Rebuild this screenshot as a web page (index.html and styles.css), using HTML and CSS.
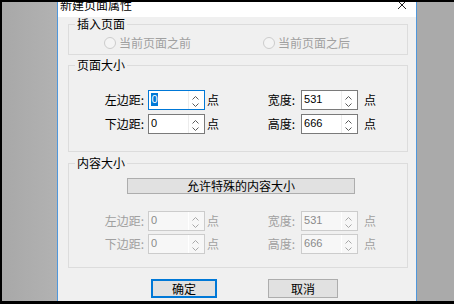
FILE: index.html
```html
<!DOCTYPE html>
<html lang="zh-CN">
<head>
    <meta charset="UTF-8">
    <title>新建页面属性</title>
    <link rel="stylesheet" href="styles.css">
</head>
<body>
    <div class="desk">
        <div class="side"></div>

        <div class="dialog">
            <div class="titlebar">
                <span class="title">新建页面属性</span>
                <svg class="close" width="10" height="10" viewBox="0 0 10 10">
                    <path d="M1 1 L9 9 M9 1 L1 9" stroke="#222" stroke-width="1" fill="none"/>
                </svg>
            </div>

            <div class="body">
                <!-- 插入位置 -->
                <fieldset class="group g-insert">
                    <legend>插入页面</legend>
                    <div class="radios">
                        <label class="radio first"><span class="dot"></span>当前页面之前</label>
                        <label class="radio"><span class="dot"></span>当前页面之后</label>
                    </div>
                </fieldset>

                <!-- 页面大小 -->
                <fieldset class="group g-page">
                    <legend>页面大小</legend>
                    <div class="row">
                        <span class="lbl">左边距:</span>
                        <div class="spin focus">
                            <span class="val"><span class="sel">0</span></span>
                            <span class="arrows"><svg width="15" height="18" viewBox="0 0 15 18"><polyline points="3.5,8.5 6.5,5.5 9.5,8.5"/><polyline points="3.5,12.5 6.5,15.5 9.5,12.5"/></svg></span>
                        </div>
                        <span class="unit">点</span>
                        <span class="lbl r">宽度:</span>
                        <div class="spin">
                            <span class="val">531</span>
                            <span class="arrows"><svg width="15" height="18" viewBox="0 0 15 18"><polyline points="3.5,8.5 6.5,5.5 9.5,8.5"/><polyline points="3.5,12.5 6.5,15.5 9.5,12.5"/></svg></span>
                        </div>
                        <span class="unit r">点</span>
                    </div>
                    <div class="row">
                        <span class="lbl">下边距:</span>
                        <div class="spin">
                            <span class="val">0</span>
                            <span class="arrows"><svg width="15" height="18" viewBox="0 0 15 18"><polyline points="3.5,8.5 6.5,5.5 9.5,8.5"/><polyline points="3.5,12.5 6.5,15.5 9.5,12.5"/></svg></span>
                        </div>
                        <span class="unit">点</span>
                        <span class="lbl r">高度:</span>
                        <div class="spin">
                            <span class="val">666</span>
                            <span class="arrows"><svg width="15" height="18" viewBox="0 0 15 18"><polyline points="3.5,8.5 6.5,5.5 9.5,8.5"/><polyline points="3.5,12.5 6.5,15.5 9.5,12.5"/></svg></span>
                        </div>
                        <span class="unit r">点</span>
                    </div>
                </fieldset>

                <!-- 内容大小 (禁用) -->
                <fieldset class="group g-content">
                    <legend>内容大小</legend>
                    <div class="wide-btn">允许特殊的内容大小</div>
                    <div class="rows disabled">
                        <div class="row">
                            <span class="lbl">左边距:</span>
                            <div class="spin">
                                <span class="val">0</span>
                                <span class="arrows"><svg width="15" height="18" viewBox="0 0 15 18"><polyline points="3.5,8.5 6.5,5.5 9.5,8.5"/><polyline points="3.5,12.5 6.5,15.5 9.5,12.5"/></svg></span>
                            </div>
                            <span class="unit">点</span>
                            <span class="lbl r">宽度:</span>
                            <div class="spin">
                                <span class="val">531</span>
                                <span class="arrows"><svg width="15" height="18" viewBox="0 0 15 18"><polyline points="3.5,8.5 6.5,5.5 9.5,8.5"/><polyline points="3.5,12.5 6.5,15.5 9.5,12.5"/></svg></span>
                            </div>
                            <span class="unit r">点</span>
                        </div>
                        <div class="row">
                            <span class="lbl">下边距:</span>
                            <div class="spin">
                                <span class="val">0</span>
                                <span class="arrows"><svg width="15" height="18" viewBox="0 0 15 18"><polyline points="3.5,8.5 6.5,5.5 9.5,8.5"/><polyline points="3.5,12.5 6.5,15.5 9.5,12.5"/></svg></span>
                            </div>
                            <span class="unit">点</span>
                            <span class="lbl r">高度:</span>
                            <div class="spin">
                                <span class="val">666</span>
                                <span class="arrows"><svg width="15" height="18" viewBox="0 0 15 18"><polyline points="3.5,8.5 6.5,5.5 9.5,8.5"/><polyline points="3.5,12.5 6.5,15.5 9.5,12.5"/></svg></span>
                            </div>
                            <span class="unit r">点</span>
                        </div>
                    </div>
                </fieldset>

                <div class="actions">
                    <div class="btn ok">确定</div>
                    <div class="btn cancel">取消</div>
                </div>
            </div>
        </div>
    </div>
</body>
</html>
```

FILE: styles.css
```css
html, body{
    margin: 0;
    background: #000;
}

body{
    width: 454px;
    height: 304px;
    overflow: hidden;
    font-family: "Noto Sans CJK SC", sans-serif;
    font-size: 12px;
    color: #000;
}

.desk{
    display: flex;
    width: 452px;
    height: 299px;
    margin: 2px 0 0 2px;
    background: #aaaaaa;
}

.side{
    width: 55px;
    background: linear-gradient(to right, #a8a8a8, #b2b2b2);
}

.dialog{
    width: 358px;
    border-left: 1px solid #4f97dc;
    border-right: 1px solid #4f97dc;
    display: flex;
    flex-direction: column;
    overflow: hidden;
}

.titlebar{
    height: 15px;
    background: #fff;
    display: flex;
    justify-content: space-between;
    overflow: hidden;
}

.title{
    line-height: 12px;
    margin-top: -3px;
    padding-left: 2px;
}

.close{
    margin-top: -2px;
    margin-right: 9px;
}

.body{
    flex: 1;
    background: #f0f0f0;
}

/* group box */
.group{
    margin: 0 8px 0 10px;
    padding: 0;
    border: 1px solid #dcdcdc;
    min-width: 0;
}

.group legend{
    margin-left: 6px;
    padding: 0 2px;
    line-height: 14px;
}

.g-page{
    margin-top: 3px;
}

.g-content{
    margin-top: 4px;
}

/* radios */
.radios{
    display: flex;
    height: 14px;
    padding: 5px 0 4px 35px;
    color: #a0a0a0;
}

.radio{
    display: flex;
    align-items: center;
    line-height: 14px;
}

.radio.first{
    width: 159px;
}

.dot{
    width: 10px;
    height: 10px;
    border: 1px solid #cccccc;
    border-radius: 50%;
    background: #f4f4f4;
    margin-right: 3px;
}

/* spin rows */
.g-page{
    padding-bottom: 17px;
}

.g-page .row:first-of-type{
    margin-top: 18px;
}

.row{
    display: flex;
    align-items: center;
    height: 20px;
}

.g-page .row + .row{
    margin-top: 4px;
}

.lbl{
    width: 75px;
    text-align: right;
    line-height: 14px;
}

.lbl.r{
    width: 76px;
}

.unit{
    margin-left: 2px;
    line-height: 14px;
}

.unit.r{
    margin-left: 6px;
}

.spin{
    box-sizing: border-box;
    width: 57px;
    height: 20px;
    margin-left: 4px;
    border: 1px solid #7a7a7a;
    background: #fff;
    display: flex;
}

.lbl.r + .spin{
    margin-left: 6px;
}

.spin.focus{
    border-color: #0078d7;
}

.val{
    flex: 1;
    padding: 2px 0 0 2px;
    font-family: "Liberation Sans", sans-serif;
    font-size: 11px;
    line-height: 13px;
}

.sel{
    display: inline-block;
    background: #0078d7;
    color: #fff;
    padding: 0 0.5px;
}

.arrows{
    width: 15px;
    border-left: 1px solid #ececec;
}

.arrows svg{
    display: block;
}

.arrows polyline{
    fill: none;
    stroke: #5a5a5a;
    stroke-width: 1;
}

/* content size group */
.wide-btn{
    box-sizing: border-box;
    width: 228px;
    height: 16px;
    margin: 8px 0 0 58px;
    border: 1px solid #adadad;
    background: #e1e1e1;
    text-align: center;
    line-height: 14px;
}

.rows{
    margin-top: 17px;
    padding-bottom: 13px;
}

.rows .row + .row{
    margin-top: 3px;
}

.disabled{
    color: #a0a0a0;
}

.disabled .spin{
    border-color: #cccccc;
    background: #f7f7f7;
}

.disabled .val{
    color: #8a8a8a;
}

.disabled .arrows{
    border-left-color: #fff;
}

.disabled .arrows polyline{
    stroke: #a8a8a8;
}

/* bottom buttons */
.actions{
    display: flex;
    margin-top: 11px;
}

.btn{
    box-sizing: border-box;
    height: 19px;
    border: 1px solid #adadad;
    background: #e1e1e1;
    text-align: center;
    line-height: 17px;
}

.btn.ok{
    width: 66px;
    margin-left: 93px;
    border: 2px solid #0078d7;
    line-height: 15px;
}

.btn.cancel{
    width: 70px;
    margin-left: 51px;
}
```
